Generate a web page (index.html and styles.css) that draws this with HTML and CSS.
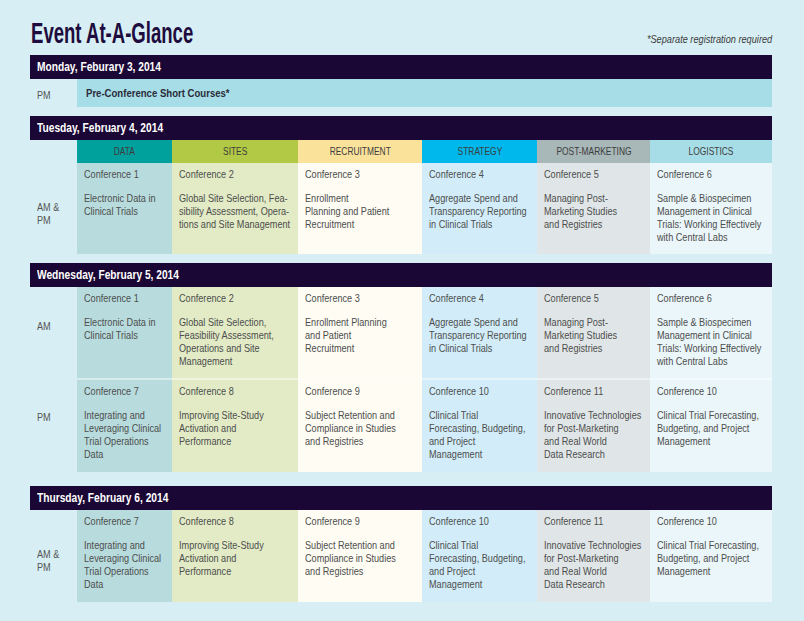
FILE: index.html
```html
<!DOCTYPE html>
<html lang="en">
<head>
<meta charset="utf-8">
<title>Event At-A-Glance</title>
<link rel="stylesheet" href="styles.css">
</head>
<body>
<div class="page">
  <header class="top">
    <h1 class="title"><span class="nx">Event At-A-Glance</span></h1>
    <p class="note"><span class="nx">*Separate registration required</span></p>
  </header>

  <section class="day day-mon">
    <div class="bar"><span class="nx">Monday, Feburary 3, 2014</span></div>
    <div class="pre-row">
      <div class="label pre-label"><span class="nx">PM</span></div>
      <div class="pre"><span class="nx">Pre-Conference Short Courses*</span></div>
    </div>
  </section>

  <section class="day day-tue">
    <div class="bar"><span class="nx">Tuesday, February 4, 2014</span></div>
    <div class="grid">
      <div class="blank"></div>
      <div class="head c-data"><span class="nx">DATA</span></div>
      <div class="head c-sites"><span class="nx">SITES</span></div>
      <div class="head c-recr"><span class="nx">RECRUITMENT</span></div>
      <div class="head c-strat"><span class="nx">STRATEGY</span></div>
      <div class="head c-post"><span class="nx">POST-MARKETING</span></div>
      <div class="head c-log"><span class="nx">LOGISTICS</span></div>

      <div class="label"><p>AM &amp;<br>PM</p></div>
      <div class="cell b-data"><p class="conf">Conference 1</p><p class="name">Electronic Data in<br>Clinical Trials</p></div>
      <div class="cell b-sites"><p class="conf">Conference 2</p><p class="name">Global Site Selection, Fea-<br>sibility Assessment, Opera-<br>tions and Site Management</p></div>
      <div class="cell b-recr"><p class="conf">Conference 3</p><p class="name">Enrollment<br>Planning and Patient<br>Recruitment</p></div>
      <div class="cell b-strat"><p class="conf">Conference 4</p><p class="name">Aggregate Spend and<br>Transparency Reporting<br>in Clinical Trials</p></div>
      <div class="cell b-post"><p class="conf">Conference 5</p><p class="name">Managing Post-<br>Marketing Studies<br>and Registries</p></div>
      <div class="cell b-log"><p class="conf">Conference 6</p><p class="name">Sample &amp; Biospecimen<br>Management in Clinical<br>Trials: Working Effectively<br>with Central Labs</p></div>
    </div>
  </section>

  <section class="day day-wed">
    <div class="bar"><span class="nx">Wednesday, February 5, 2014</span></div>
    <div class="grid">
      <div class="label single"><p>AM</p></div>
      <div class="cell b-data"><p class="conf">Conference 1</p><p class="name">Electronic Data in<br>Clinical Trials</p></div>
      <div class="cell b-sites"><p class="conf">Conference 2</p><p class="name">Global Site Selection,<br>Feasibility Assessment,<br>Operations and Site<br>Management</p></div>
      <div class="cell b-recr"><p class="conf">Conference 3</p><p class="name">Enrollment Planning<br>and Patient<br>Recruitment</p></div>
      <div class="cell b-strat"><p class="conf">Conference 4</p><p class="name">Aggregate Spend and<br>Transparency Reporting<br>in Clinical Trials</p></div>
      <div class="cell b-post"><p class="conf">Conference 5</p><p class="name">Managing Post-<br>Marketing Studies<br>and Registries</p></div>
      <div class="cell b-log"><p class="conf">Conference 6</p><p class="name">Sample &amp; Biospecimen<br>Management in Clinical<br>Trials: Working Effectively<br>with Central Labs</p></div>

      <div class="label single"><p>PM</p></div>
      <div class="cell sep b-data"><p class="conf">Conference 7</p><p class="name">Integrating and<br>Leveraging Clinical<br>Trial Operations<br>Data</p></div>
      <div class="cell sep b-sites"><p class="conf">Conference 8</p><p class="name">Improving Site-Study<br>Activation and<br>Performance</p></div>
      <div class="cell sep b-recr"><p class="conf">Conference 9</p><p class="name">Subject Retention and<br>Compliance in Studies<br>and Registries</p></div>
      <div class="cell sep b-strat"><p class="conf">Conference 10</p><p class="name">Clinical Trial<br>Forecasting, Budgeting,<br>and Project<br>Management</p></div>
      <div class="cell sep b-post"><p class="conf">Conference 11</p><p class="name">Innovative Technologies<br>for Post-Marketing<br>and Real World<br>Data Research</p></div>
      <div class="cell sep b-log"><p class="conf">Conference 10</p><p class="name">Clinical Trial Forecasting,<br>Budgeting, and Project<br>Management</p></div>
    </div>
  </section>

  <section class="day day-thu">
    <div class="bar"><span class="nx">Thursday, February 6, 2014</span></div>
    <div class="grid">
      <div class="label"><p>AM &amp;<br>PM</p></div>
      <div class="cell b-data"><p class="conf">Conference 7</p><p class="name">Integrating and<br>Leveraging Clinical<br>Trial Operations<br>Data</p></div>
      <div class="cell b-sites"><p class="conf">Conference 8</p><p class="name">Improving Site-Study<br>Activation and<br>Performance</p></div>
      <div class="cell b-recr"><p class="conf">Conference 9</p><p class="name">Subject Retention and<br>Compliance in Studies<br>and Registries</p></div>
      <div class="cell b-strat"><p class="conf">Conference 10</p><p class="name">Clinical Trial<br>Forecasting, Budgeting,<br>and Project<br>Management</p></div>
      <div class="cell b-post"><p class="conf">Conference 11</p><p class="name">Innovative Technologies<br>for Post-Marketing<br>and Real World<br>Data Research</p></div>
      <div class="cell b-log"><p class="conf">Conference 10</p><p class="name">Clinical Trial Forecasting,<br>Budgeting, and Project<br>Management</p></div>
    </div>
  </section>
</div>
</body>
</html>
```

FILE: styles.css
```css
* { box-sizing: border-box; }

html, body {
  margin: 0;
  padding: 0;
  background: #d7eff4;
}

body {
  font-family: "Liberation Sans", Arial, sans-serif;
  color: #4d4d4d;
  font-size: 11px;
}

/* horizontally condensed text (the original uses a condensed face) */
.nx {
  display: inline-block;
  white-space: nowrap;
  transform: scaleX(0.82);
  transform-origin: left center;
}

.page {
  width: 804px;
  height: 621px;
  padding: 0 32px 0 30px;
}

.top {
  display: flex;
  justify-content: space-between;
  align-items: baseline;
  padding-top: 18px;
  height: 55px;
}

.title {
  margin: 0;
  padding-left: 1px;
  font-size: 29px;
  line-height: 30px;
  font-weight: bold;
  color: #1d0c3d;
}

.title .nx { transform: scaleX(0.64); }

.note {
  margin: 0;
  font-style: italic;
  font-size: 10px;
  color: #3a3a3a;
}

.note .nx {
  transform: scaleX(0.92);
  transform-origin: right center;
}

.day-tue { margin-top: 9px; }
.day-wed { margin-top: 9px; }
.day-thu { margin-top: 14px; }

.bar {
  height: 24px;
  line-height: 24px;
  background: #1b0735;
  color: #fff;
  font-weight: bold;
  font-size: 12px;
  padding-left: 7px;
}

.bar .nx { transform: scaleX(0.85); }

.pre-row {
  display: flex;
  height: 28px;
}

.pre-label {
  width: 47px;
}

.pre {
  flex: 1;
  background: #a6dde6;
  font-weight: bold;
  font-size: 11px;
  color: #2b2b38;
  line-height: 28px;
  padding-left: 9px;
}

.pre .nx { transform: scaleX(0.87); }

.grid {
  display: grid;
  grid-template-columns: 47px 95px 126px 124px 115px 113px 122px;
}

.head {
  height: 23px;
  line-height: 23px;
  text-align: center;
  font-size: 10.5px;
  color: #3d3d3d;
}

.head .nx {
  transform: scaleX(0.8);
  transform-origin: center center;
}

.label {
  padding-left: 7px;
  padding-top: 38px;
  line-height: 13px;
  color: #555;
}

.label p {
  margin: 0;
  white-space: nowrap;
  transform: scaleX(0.83);
  transform-origin: left top;
}

.label.single { padding-top: 33px; }

.label.pre-label {
  padding-top: 0;
  line-height: 32px;
}

.cell {
  height: 91px;
  padding: 5px 7px 0 7px;
  line-height: 13px;
}

.cell p {
  white-space: nowrap;
  transform: scaleX(0.83);
  transform-origin: left top;
}

.cell.sep {
  height: 94px;
  border-top: 2px solid rgba(255, 255, 255, 0.45);
}

.day-thu .cell { height: 92px; }

.conf { margin: 0 0 11px 0; }
.name { margin: 0; }

.c-data  { background: #00a09d; }
.c-sites { background: #b1c944; }
.c-recr  { background: #fbe29b; }
.c-strat { background: #00b8eb; }
.c-post  { background: #a8b7b8; }
.c-log   { background: #a7dde6; }

.b-data  { background: #b8dcdd; }
.b-sites { background: #e2ebc5; }
.b-recr  { background: #fefcf3; }
.b-strat { background: #d2edf9; }
.b-post  { background: #e0e6e7; }
.b-log   { background: #eaf6f9; }
```
